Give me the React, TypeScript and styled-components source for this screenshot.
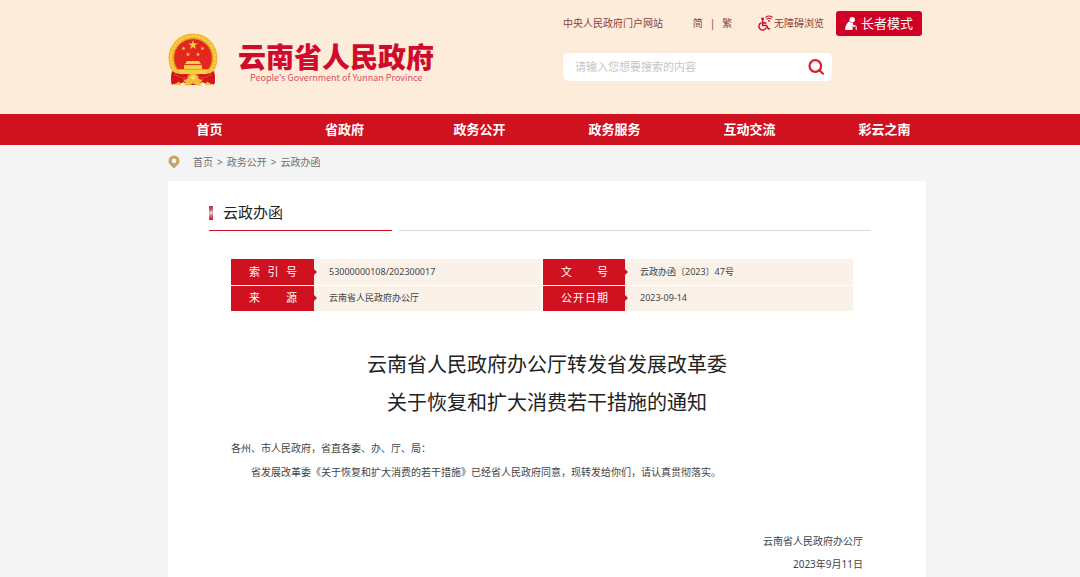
import React from 'react';
import styled, { createGlobalStyle } from 'styled-components';

const GlobalStyle = createGlobalStyle`
  * { box-sizing: border-box; }
  body {
    margin: 0;
    background: #f4f4f4;
    color: #444;
    font-family: "Noto Sans", "Noto Sans CJK SC", sans-serif;
    font-size: 10px;
  }
  a { color: inherit; text-decoration: none; }
  button, input { font-family: inherit; }
`;

const Page = styled.div`
  min-height: 100vh;
  display: flex;
  flex-direction: column;
`;

const Band = styled.div<{ $bg?: string }>`
  padding-left: 14px;
  background: ${(p) => p.$bg ?? 'transparent'};
`;

const Container = styled.div<{ $width: number }>`
  width: 100%;
  max-width: ${(p) => p.$width}px;
  margin: 0 auto;
`;

const HeaderRow = styled(Container)`
  display: flex;
  justify-content: space-between;
  padding: 10px 4px 27px 0;
`;

const Brand = styled.a`
  display: flex;
  gap: 20px;
  padding-top: 23px;
`;

const BrandText = styled.span`
  display: flex;
  flex-direction: column;
  padding-top: 8px;
`;

const BrandName = styled.span`
  color: #cf0a2c;
  font-family: "Noto Sans CJK SC", sans-serif;
  font-size: 28px;
  font-weight: 900;
  line-height: 30px;
  white-space: nowrap;
`;

const BrandSub = styled.span`
  padding-left: 12px;
  color: #d9505c;
  font-family: "Noto Sans CJK SC", sans-serif;
  font-size: 9px;
  line-height: 14px;
  white-space: nowrap;
`;

const Tools = styled.div`
  display: flex;
  flex-direction: column;
  gap: 17px;
  width: 359px;
`;

const TopLinks = styled.div`
  display: flex;
  align-items: center;
  justify-content: space-between;
  height: 26px;
  color: #8f4038;
  line-height: 16px;
  white-space: nowrap;
`;

const Language = styled.span`
  display: flex;
  gap: 7px;
  margin-left: 4px;
`;

const IconLink = styled.a`
  display: flex;
  align-items: center;
  gap: 1px;
`;

const ElderGroup = styled.span`
  display: flex;
  align-items: center;
  gap: 12px;
`;

const ElderButton = styled.button`
  display: flex;
  align-items: center;
  justify-content: center;
  gap: 4px;
  width: 86px;
  height: 25px;
  padding: 0;
  border: 0;
  border-radius: 3px;
  background: #cf0025;
  color: #fff;
  font-size: 13px;
  line-height: 20px;
`;

const Search = styled.form`
  display: flex;
  align-items: center;
  width: 269px;
  height: 28px;
  padding: 0 7px 0 12px;
  border-radius: 5px;
  background: #fff;
`;

const SearchInput = styled.input`
  flex: 1;
  min-width: 0;
  padding: 0;
  border: 0;
  outline: 0;
  background: transparent;
  font-size: 11px;
  line-height: 18px;
  &::placeholder { color: #c6c6c6; opacity: 1; }
`;

const SearchButton = styled.button`
  display: flex;
  padding: 0;
  border: 0;
  background: transparent;
`;

const NavGrid = styled(Container)`
  display: grid;
  grid-template-columns: repeat(6, 1fr);
`;

const NavLink = styled.a`
  color: #fff;
  font-size: 13px;
  font-weight: 700;
  line-height: 31px;
  text-align: center;
`;

const Crumbs = styled(Container)`
  display: flex;
  align-items: center;
  gap: 4px;
  height: 36px;
  padding-bottom: 3px;
  color: #6f6f6f;
  line-height: 16px;
`;

const PinBox = styled.span`
  display: flex;
  width: 21px;
`;

const Main = styled(Band)`
  flex: 1;
  display: flex;
`;

const Card = styled(Container)`
  background: #fff;
`;

const SectionHead = styled.div`
  display: grid;
  grid-template-columns: 183px 1fr;
  gap: 7px;
  padding: 14px 55px 0 41px;
`;

const SectionTitle = styled.h2`
  display: flex;
  align-items: center;
  gap: 10px;
  height: 36px;
  margin: 0;
  border-bottom: 1px solid #d01120;
  color: #222;
  font-size: 15px;
  font-weight: 400;
  line-height: 35px;
  &::before {
    content: '';
    width: 4px;
    height: 14px;
    background: linear-gradient(165deg, #c22840 0%, #d0596a 28%, #f3ccd2 48%, #d67683 66%, #b8152d 100%);
  }
`;

const SectionRule = styled.div`
  border-bottom: 1px solid #d9d9d9;
`;

const Article = styled.article`
  padding: 28px 63px 0;
`;

const InfoTable = styled.table`
  width: calc(100% - 10px);
  border-collapse: collapse;
  table-layout: fixed;
  tr + tr th, tr + tr td { border-top: 1px solid #fff; }
`;

const InfoLabel = styled.th`
  position: relative;
  width: 83px;
  height: 26px;
  padding: 0 17px 0 18px;
  background: #d01120;
  color: #fff;
  font-size: 11px;
  font-weight: 400;
  line-height: 24px;
  text-align: justify;
  text-align-last: justify;
  &::after {
    content: '';
    position: absolute;
    left: 100%;
    top: 50%;
    margin-top: -3px;
    border: 3px solid transparent;
    border-left-color: #d01120;
    border-right-width: 0;
  }
`;

const InfoValue = styled.td<{ $divider?: boolean }>`
  padding: 0 0 0 15px;
  border-right: ${(p) => (p.$divider ? '2px solid #fff' : '0')};
  background: #faf2e8;
  color: #444;
  font-size: 9px;
  line-height: 24px;
`;

const Title = styled.h1`
  margin: 35px 0 14px;
  color: #222;
  font-size: 20px;
  font-weight: 400;
  line-height: 38px;
  text-align: center;
`;

const Paragraph = styled.p<{ $indent?: boolean }>`
  margin: 0;
  line-height: 24px;
  text-indent: ${(p) => (p.$indent ? '2em' : '0')};
`;

const SignOff = styled.footer`
  padding-top: 46px;
  line-height: 23px;
  text-align: right;
`;

const STAR = 'M0-1L.22-.31H.95L.36.12.59.81 0 .38-.59.81-.36.12-.95-.31H-.22Z';

const Emblem = () => (
  <svg width="50" height="54" viewBox="0 0 50 54" role="img" aria-label="国徽">
    <path d="M6 36L3 50l7 2 5-3 6 3h8l6-3 5 3 7-2-3-14z" fill="#d2161c" />
    <circle cx="25" cy="25" r="24.5" fill="#f0b62c" />
    <circle cx="25" cy="25" r="22" fill="none" stroke="#f8cf4a" strokeWidth="2.5" strokeDasharray="2.5 1" />
    <circle cx="25" cy="25" r="19.3" fill="#e22620" stroke="#dc9a22" />
    <g fill="#f7cf43">
      <path d={STAR} transform="translate(25 12) scale(5)" />
      <path d={STAR} transform="translate(15.5 15.5) scale(2.3)" />
      <path d={STAR} transform="translate(34.5 15.5) scale(2.3)" />
      <path d={STAR} transform="translate(20 21.500) scale(2.3)" />
      <path d={STAR} transform="translate(30 21.500) scale(2.3)" />
      <path d="M19 28h12l2 3H17zM16 32h18v4H16zM9 36h32l-3 5H12z" />
    </g>
    <path d="M10 36.5h30M16 32h18" stroke="#d9861f" strokeWidth=".6" />
    <path d="M4 38q6 4 14 3l2 4-6 5-4-2-6 4q-2-7 0-14zM46 38q-6 4-14 3l-2 4 6 5 4-2 6 4q2-7 0-14z" fill="#d2161c" />
    <path d="M6 41q7 5 13 4M44 41q-7 5-13 4" fill="none" stroke="#f0502f" strokeWidth=".8" />
    <circle cx="25" cy="44.500" r="4.5" fill="#f3be35" />
    <circle cx="25" cy="44.500" r="2" fill="#fbe073" />
    <path d="M15 46.500q5-.5 10 3 5-3.500 10-3l-3 4 2 2h-5l-4-2-4 2h-5l2-2z" fill="#f2bd35" />
    <path d="M6 51.500l5-3 2 4zM44 51.500l-5-3-2 4z" fill="#f2bd35" />
  </svg>
);

const AccessIcon = () => (
  <svg width="15" height="16" viewBox="0 0 15 16" fill="none" stroke="#cf0a2c" strokeLinecap="round" aria-hidden="true">
    <circle cx="4.600" cy="4" r="1.4" fill="#cf0a2c" stroke="none" />
    <path d="M4.700 5.800v4.700h3.800l1.800 3.300h1.200M5 7.900h3" strokeWidth="1.5" />
    <path d="M3 7.900a3.800 3.800 0 1 0 5.200 4.900" strokeWidth="1.4" />
    <path d="M7.900 2.200q3.100-2.500 6.300 0M9 4q2-1.500 4 0" strokeWidth="1.1" />
    <circle cx="11" cy="5.900" r=".9" fill="#cf0a2c" stroke="none" />
  </svg>
);

const ElderIcon = () => (
  <svg width="12" height="13" viewBox="0 0 12 13" aria-hidden="true">
    <circle cx="7.200" cy="2.700" r="2.700" fill="#fff" />
    <path d="M4.200 4.300Q5.400 6.200 8 5.700L8.300 8l2 1-.5 1-3-.7L8 11l-.8 2H.3Q-.2 8 4.200 4.300z" fill="#fff" />
    <path d="M8.600 9.200q2.400-1.200 2.600.5V13" fill="none" stroke="#fff" strokeWidth="1" />
  </svg>
);

const SearchIcon = () => (
  <svg width="17" height="17" viewBox="0 0 17 17" fill="none" stroke="#d6202e" strokeWidth="2.2" strokeLinecap="round" aria-hidden="true">
    <circle cx="7.300" cy="7" r="5.800" />
    <path d="M11.700 11.500l3.300 3.200" />
  </svg>
);

const PinIcon = () => (
  <svg width="12" height="14" viewBox="0 0 12 14" aria-hidden="true">
    <path
      d="M6 .5a5.500 5.500 0 0 0-5.500 5.500c0 3.200 3.300 5 5.500 7.500 2.200-2.500 5.500-4.300 5.500-7.500A5.500 5.500 0 0 0 6 .5zm0 3.100a2.300 2.300 0 1 1 0 4.600 2.300 2.300 0 0 1 0-4.600z"
      fill="#c9a268"
      fillRule="evenodd"
    />
  </svg>
);

const NAV = ['首页', '省政府', '政务公开', '政务服务', '互动交流', '彩云之南'];

const INFO = [
  [['索引号', '53000000108/202300017'], ['文号', '云政办函〔2023〕47号']],
  [['来源', '云南省人民政府办公厅'], ['公开日期', '2023-09-14']],
];

export default function App() {
  return (
    <Page>
      <GlobalStyle />
      <Band as="header" $bg="#fdecda">
        <HeaderRow $width={758}>
          <Brand href="#">
            <Emblem />
            <BrandText>
              <BrandName>云南省人民政府</BrandName>
              <BrandSub>People's Government of Yunnan Province</BrandSub>
            </BrandText>
          </Brand>
          <Tools>
            <TopLinks>
              <a href="#">中央人民政府门户网站</a>
              <Language>
                <a href="#">简</a>
                <span>|</span>
                <a href="#">繁</a>
              </Language>
              <ElderGroup>
                <IconLink href="#">
                  <AccessIcon />
                  无障碍浏览
                </IconLink>
                <ElderButton type="button">
                  <ElderIcon />
                  长者模式
                </ElderButton>
              </ElderGroup>
            </TopLinks>
            <Search role="search" onSubmit={(e) => e.preventDefault()}>
              <SearchInput type="text" aria-label="搜索" placeholder="请输入您想要搜索的内容" />
              <SearchButton type="submit" aria-label="搜索">
                <SearchIcon />
              </SearchButton>
            </Search>
          </Tools>
        </HeaderRow>
      </Band>

      <Band as="nav" $bg="#d01120">
        <NavGrid $width={810}>
          {NAV.map((item) => (
            <NavLink key={item} href="#">{item}</NavLink>
          ))}
        </NavGrid>
      </Band>

      <Band>
        <Crumbs $width={758}>
          <PinBox><PinIcon /></PinBox>
          <a href="#">首页</a>
          <span>&gt;</span>
          <a href="#">政务公开</a>
          <span>&gt;</span>
          <a href="#">云政办函</a>
        </Crumbs>
      </Band>

      <Main as="main">
        <Card $width={758}>
          <SectionHead>
            <SectionTitle>云政办函</SectionTitle>
            <SectionRule />
          </SectionHead>
          <Article>
            <InfoTable>
              <tbody>
                {INFO.map((row) => (
                  <tr key={row[0][0]}>
                    {row.map(([label, value], i) => (
                      <React.Fragment key={label}>
                        <InfoLabel scope="row">{label}</InfoLabel>
                        <InfoValue $divider={i === 0}>{value}</InfoValue>
                      </React.Fragment>
                    ))}
                  </tr>
                ))}
              </tbody>
            </InfoTable>
            <Title>
              云南省人民政府办公厅转发省发展改革委
              <br />
              关于恢复和扩大消费若干措施的通知
            </Title>
            <Paragraph>各州、市人民政府，省直各委、办、厅、局：</Paragraph>
            <Paragraph $indent>
              省发展改革委《关于恢复和扩大消费的若干措施》已经省人民政府同意，现转发给你们，请认真贯彻落实。
            </Paragraph>
            <SignOff>
              <div>云南省人民政府办公厅</div>
              <div>2023年9月11日</div>
            </SignOff>
          </Article>
        </Card>
      </Main>
    </Page>
  );
}
